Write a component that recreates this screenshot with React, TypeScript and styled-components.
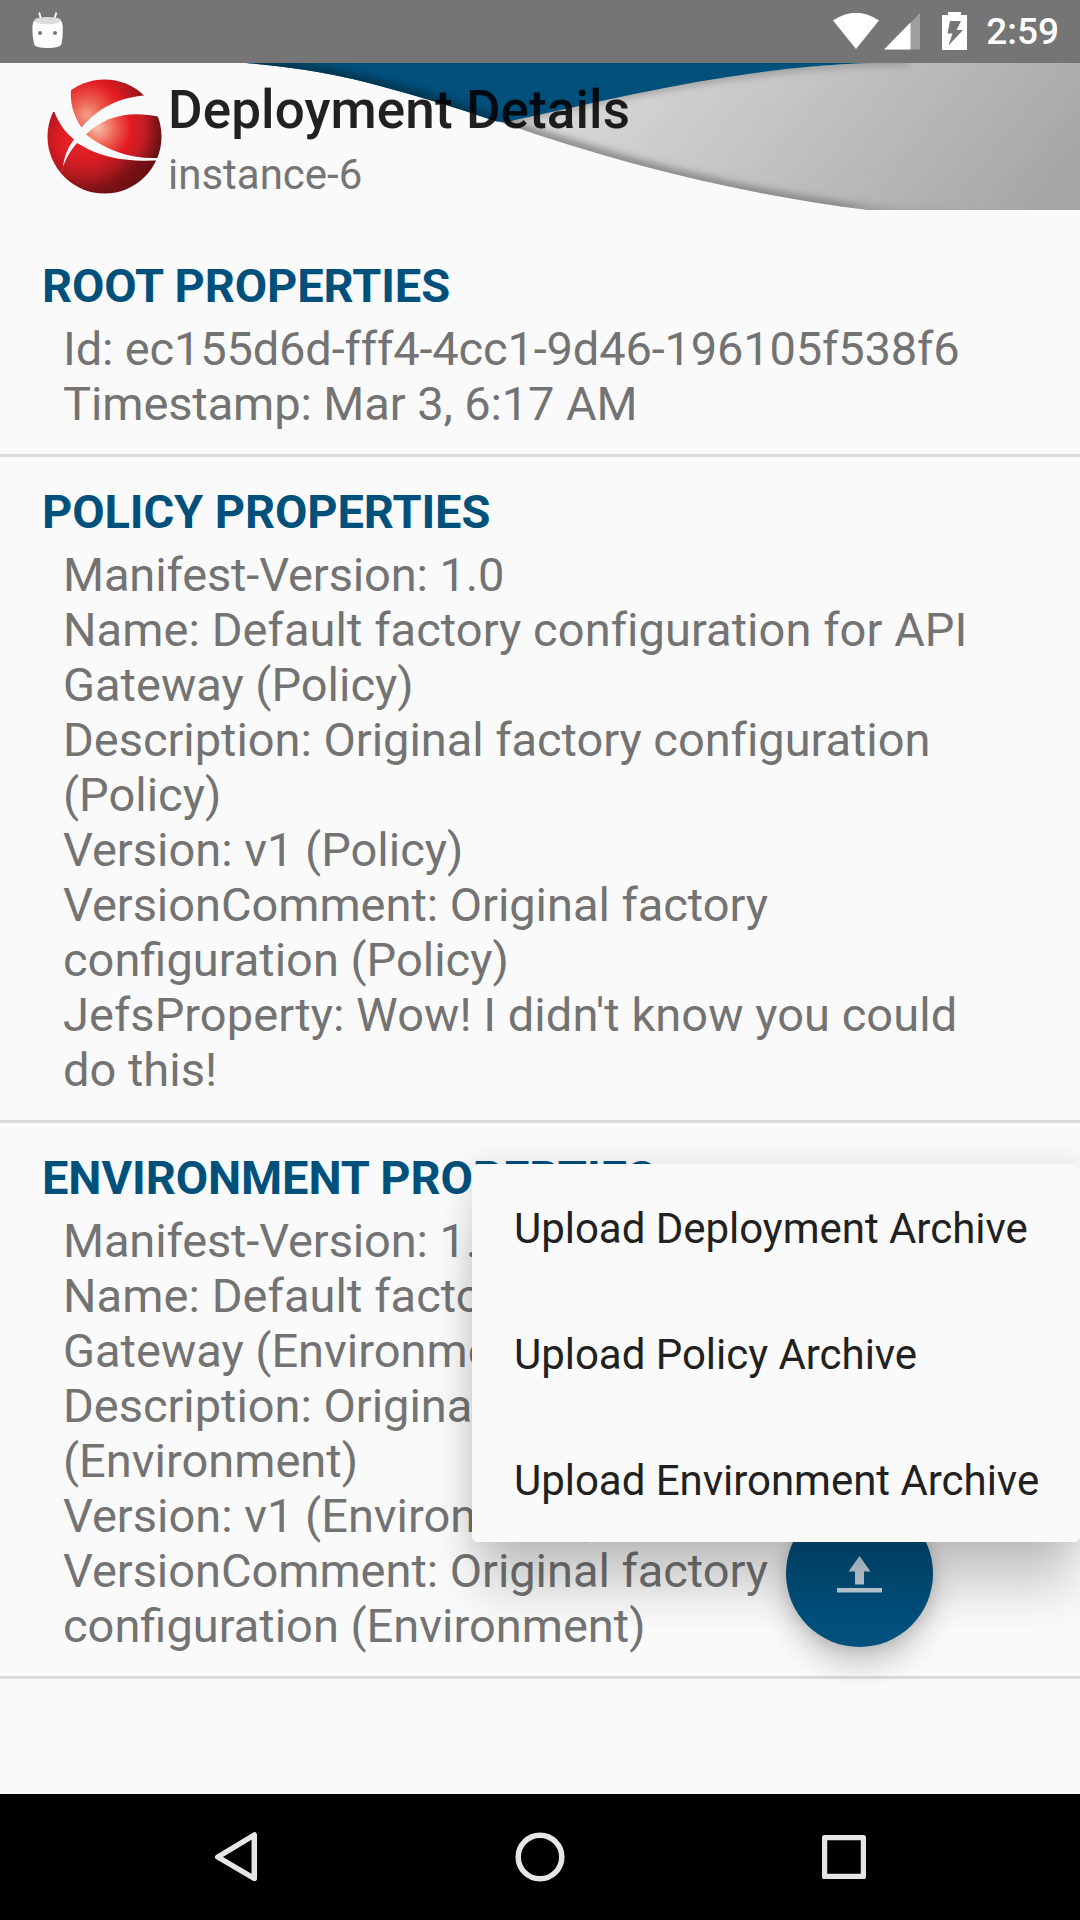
import React from 'react';
import styled, { createGlobalStyle } from 'styled-components';

const GlobalStyle = createGlobalStyle`
  * { box-sizing: border-box; }
  body { margin: 0; background: #fafafa; font-family: Roboto, "Liberation Sans", sans-serif; }
`;

const Screen = styled.div`
  position: relative;
  display: flex;
  flex-direction: column;
  width: 1080px;
  height: 1920px;
  overflow: hidden;
  background: #fafafa;
`;

const StatusBar = styled.header`
  display: flex;
  align-items: center;
  justify-content: space-between;
  height: 63px;
  flex: none;
  padding: 0 21px 0 30px;
  background: #757575;
`;

const StatusIcons = styled.div`
  display: flex;
  align-items: center;
`;

const Clock = styled.span`
  margin-left: 18px;
  color: #fff;
  font-size: 37px;
  font-weight: 500;
  line-height: 65px;
`;

const AppBar = styled.div`
  position: relative;
  display: flex;
  height: 147px;
  flex: none;
  padding: 15px 0 0 44px;
`;

const Swoosh = styled.svg`
  position: absolute;
  inset: 0;
`;

const Logo = styled.svg`
  position: relative;
  flex: none;
`;

const Titles = styled.div`
  position: relative;
  display: flex;
  flex-direction: column;
  margin-left: 2px;
`;

const Title = styled.h1`
  margin: 0;
  color: rgba(0, 0, 0, 0.87);
  font-size: 53px;
  font-weight: 500;
  line-height: 65px;
  letter-spacing: 0.1px;
`;

const Subtitle = styled.div`
  color: #757575;
  font-size: 42px;
  line-height: 63px;
`;

const Content = styled.main`
  flex: 1;
  padding-top: 21px;
`;

const Section = styled.section`
  padding: 27px 42px 23px;
  border-bottom: 3px solid #dbdbdb;
`;

const Heading = styled.h2`
  margin: 0 0 7px;
  color: #00507c;
  font-size: 47px;
  font-weight: 700;
  line-height: 56px;
  letter-spacing: -0.1px;
`;

const Line = styled.div<{ $tracking?: number }>`
  padding-left: 21px;
  color: #737373;
  font-size: 47px;
  line-height: 55px;
  letter-spacing: ${(p) => (p.$tracking ? `${p.$tracking}px` : 'normal')};
  white-space: nowrap;
`;

const Fab = styled.button`
  position: absolute;
  left: 786px;
  top: 1500px;
  display: grid;
  place-items: center;
  width: 147px;
  height: 147px;
  padding: 0;
  border: 0;
  border-radius: 50%;
  background: #00507c;
  box-shadow: 0 18px 30px rgba(0, 0, 0, 0.2), 0 2px 14px rgba(0, 0, 0, 0.12);
`;

const Menu = styled.div`
  position: absolute;
  left: 472px;
  top: 1164px;
  display: flex;
  flex-direction: column;
  width: 608px;
  border-radius: 6px;
  background: #fafafa;
  box-shadow: 0 54px 46px -8px rgba(0, 0, 0, 0.19), 0 2px 34px rgba(0, 0, 0, 0.13);
  clip-path: inset(-50px 0 -84px -60px);
`;

const MenuItem = styled.div`
  height: 126px;
  padding-left: 42px;
  color: #212121;
  font-size: 42px;
  line-height: 130px;
  letter-spacing: -0.03px;
  white-space: nowrap;
`;

const NavBar = styled.nav`
  display: flex;
  justify-content: space-between;
  align-items: center;
  height: 126px;
  flex: none;
  padding: 0 206px;
  background: #000;
`;

interface PropertyLine {
  text: string;
  tracking?: number;
}

const sections: { title: string; lines: PropertyLine[] }[] = [
  {
    title: 'ROOT PROPERTIES',
    lines: [
      { text: 'Id: ec155d6d-fff4-4cc1-9d46-196105f538f6', tracking: -0.15 },
      { text: 'Timestamp: Mar 3, 6:17 AM', tracking: -0.1 },
    ],
  },
  {
    title: 'POLICY PROPERTIES',
    lines: [
      { text: 'Manifest-Version: 1.0', tracking: -0.12 },
      { text: 'Name: Default factory configuration for API', tracking: 0.06 },
      { text: 'Gateway (Policy)' },
      { text: 'Description: Original factory configuration', tracking: -0.04 },
      { text: '(Policy)' },
      { text: 'Version: v1 (Policy)' },
      { text: 'VersionComment: Original factory', tracking: -0.04 },
      { text: 'configuration (Policy)' },
      { text: "JefsProperty: Wow! I didn't know you could", tracking: 0.05 },
      { text: 'do this!' },
    ],
  },
  {
    title: 'ENVIRONMENT PROPERTIES',
    lines: [
      { text: 'Manifest-Version: 1.0', tracking: -0.12 },
      { text: 'Name: Default factory configuration for API', tracking: 0.06 },
      { text: 'Gateway (Environment)' },
      { text: 'Description: Original factory configuration', tracking: -0.04 },
      { text: '(Environment)' },
      { text: 'Version: v1 (Environment)' },
      { text: 'VersionComment: Original factory', tracking: -0.04 },
      { text: 'configuration (Environment)' },
    ],
  },
];

const actions = ['Upload Deployment Archive', 'Upload Policy Archive', 'Upload Environment Archive'];

function AndroidHead() {
  return (
    <svg width="36" height="40" viewBox="0 0 36 40">
      <path d="M9.2 0.5 11 7M26.3 0.5 24.5 7" stroke="#fff" strokeWidth="1.8" />
      <path d="M4 9Q2.500 10 2.400 17T4 32Q5 36 17.700 36T31.500 32Q33 24 32.800 17T31 9Z" fill="#fff" />
      <ellipse cx="17.600" cy="8.600" rx="13.500" ry="3.700" fill="#dcdcdc" />
      <circle cx="10" cy="21" r="2" fill="#757575" />
      <circle cx="25" cy="21" r="2" fill="#757575" />
    </svg>
  );
}

function StatusGlyphs() {
  return (
    <svg width="136" height="63" viewBox="833 0 136 63">
      <path d="M834 20.500Q857 5 880 20.500L857 49Z" fill="#fff" />
      <path d="M921 13V49.500H885Z" fill="#9e9e9e" />
      <path d="M911.500 22.500V49.500H885Z" fill="#fff" />
      <path d="M949 12H962V15H968V50H943V15H949Z" fill="#fff" />
      <path d="M951 21H962L957.500 30H964L949.500 45.500L953.500 33.500H948.500Z" fill="#757575" />
    </svg>
  );
}

function HeaderSwoosh() {
  return (
    <Swoosh width="1080" height="147" viewBox="0 63 1080 147">
      <defs>
        <linearGradient id="grey" gradientUnits="userSpaceOnUse" x1="600" y1="60" x2="940" y2="330">
          <stop offset="0" stopColor="#d8d8d8" />
          <stop offset="1" stopColor="#a6a6a6" />
        </linearGradient>
        <linearGradient id="edge" gradientUnits="userSpaceOnUse" x1="840" y1="0" x2="980" y2="0">
          <stop offset="0" stopColor="#7c7c7c" />
          <stop offset="0.300" stopColor="#7c7c7c" stopOpacity="0.400" />
          <stop offset="1" stopColor="#7c7c7c" stopOpacity="0" />
        </linearGradient>
        <filter id="soft" x="-10%" y="-30%" width="120%" height="160%">
          <feGaussianBlur stdDeviation="4" />
        </filter>
        <clipPath id="greyClip">
          <path d="M500 122C620 164 740 194 868 210H1080V63H870C740 67 620 94 500 122Z" />
        </clipPath>
        <clipPath id="blueClip">
          <path d="M246 63Q320 69 380 86Q440 102 492 120Q502 124 515 120C620 97 740 67 870 63Z" />
        </clipPath>
      </defs>
      <g clipPath="url(#greyClip)">
        <rect x="490" y="63" width="590" height="147" fill="url(#grey)" />
        <path d="M480 115C620 164 740 194 868 211L970 214" fill="none" stroke="url(#edge)" strokeWidth="9" filter="url(#soft)" />
        <path d="M500 122C620 94 740 67 870 62H908" fill="none" stroke="#8a8a8a" strokeWidth="6" filter="url(#soft)" />
      </g>
      <g clipPath="url(#blueClip)">
        <rect x="220" y="63" width="660" height="70" fill="#00507c" />
        <path d="M220 61Q320 69 380 86Q440 102 498 123" fill="none" stroke="#003048" strokeWidth="11" filter="url(#soft)" />
      </g>
    </Swoosh>
  );
}

function BrandLogo() {
  return (
    <Logo width="122" height="118" viewBox="44 78 122 118">
      <defs>
        <radialGradient id="glowTop" gradientUnits="userSpaceOnUse" cx="87" cy="115" r="62">
          <stop offset="0" stopColor="#f4a088" />
          <stop offset="0.250" stopColor="#ec5c4c" />
          <stop offset="0.550" stopColor="#e31b23" />
          <stop offset="1" stopColor="#8a1519" />
        </radialGradient>
        <radialGradient id="glowRight" gradientUnits="userSpaceOnUse" cx="98" cy="128" r="66">
          <stop offset="0" stopColor="#f8bfa8" />
          <stop offset="0.250" stopColor="#ee6654" />
          <stop offset="0.500" stopColor="#e31b23" />
          <stop offset="0.700" stopColor="#c41d24" />
          <stop offset="1" stopColor="#5f0e12" />
        </radialGradient>
        <radialGradient id="shade" gradientUnits="userSpaceOnUse" cx="84" cy="130" r="76">
          <stop offset="0" stopColor="#e8242a" />
          <stop offset="0.400" stopColor="#dc1c23" />
          <stop offset="0.600" stopColor="#b51a20" />
          <stop offset="0.800" stopColor="#7c1216" />
          <stop offset="1" stopColor="#6a0f13" />
        </radialGradient>
        <radialGradient id="shadeLeft" gradientUnits="userSpaceOnUse" cx="76" cy="140" r="40">
          <stop offset="0" stopColor="#ea2429" />
          <stop offset="0.500" stopColor="#dc1c23" />
          <stop offset="1" stopColor="#9c171c" />
        </radialGradient>
        <clipPath id="disc">
          <circle cx="104.500" cy="136.500" r="57" />
        </clipPath>
      </defs>
      <g clipPath="url(#disc)">
        <path d="M71 91L71 76H150L144 95.500C118 98 98 108 81.500 127.500C74 116 70 104 71 91Z" fill="url(#glowTop)" />
        <path d="M86 134.500C104 116 130 110 160 117L166 120V158H153C128 158 106 150 86 134.500Z" fill="url(#glowRight)" />
        <path d="M77 143C100 157 124 163 166 160V196H66L60 176C64 162 69 152 77 143Z" fill="url(#shade)" />
        <path d="M54.500 112C58 122 65 132 74 139.500C68 147 64 157 63 167L60 176L44 160V112Z" fill="url(#shadeLeft)" />
      </g>
    </Logo>
  );
}

export default function App() {
  return (
    <Screen>
      <GlobalStyle />
      <StatusBar>
        <AndroidHead />
        <StatusIcons>
          <StatusGlyphs />
          <Clock>2:59</Clock>
        </StatusIcons>
      </StatusBar>
      <AppBar>
        <HeaderSwoosh />
        <BrandLogo />
        <Titles>
          <Title>Deployment Details</Title>
          <Subtitle>instance-6</Subtitle>
        </Titles>
      </AppBar>
      <Content>
        {sections.map((section) => (
          <Section key={section.title}>
            <Heading>{section.title}</Heading>
            {section.lines.map((line) => (
              <Line key={line.text} $tracking={line.tracking}>
                {line.text}
              </Line>
            ))}
          </Section>
        ))}
      </Content>
      <NavBar>
        <svg width="60" height="60" viewBox="206 1827 60 60" fill="none" stroke="#e6e6e6" strokeWidth="5.500" strokeLinejoin="round">
          <path d="M254.300 1835V1878.500L217.800 1857Z" />
        </svg>
        <svg width="60" height="60" viewBox="510 1827 60 60" fill="none" stroke="#e6e6e6" strokeWidth="5.500">
          <circle cx="540" cy="1857" r="21.800" />
        </svg>
        <svg width="60" height="60" viewBox="814 1827 60 60" fill="none" stroke="#e6e6e6" strokeWidth="5.200" strokeLinejoin="round">
          <rect x="824.600" y="1837.600" width="38.800" height="38.800" />
        </svg>
      </NavBar>
      <Fab aria-label="Upload">
        <svg width="50" height="42" viewBox="835 1552.500 50 42" fill="#c4d2dc">
          <path d="M859.500 1555.500 870.500 1571H864V1584H855V1571H848.500Z" />
          <path d="M837 1587.500H882V1592H837Z" />
        </svg>
      </Fab>
      <Menu>
        {actions.map((action) => (
          <MenuItem key={action}>{action}</MenuItem>
        ))}
      </Menu>
    </Screen>
  );
}
